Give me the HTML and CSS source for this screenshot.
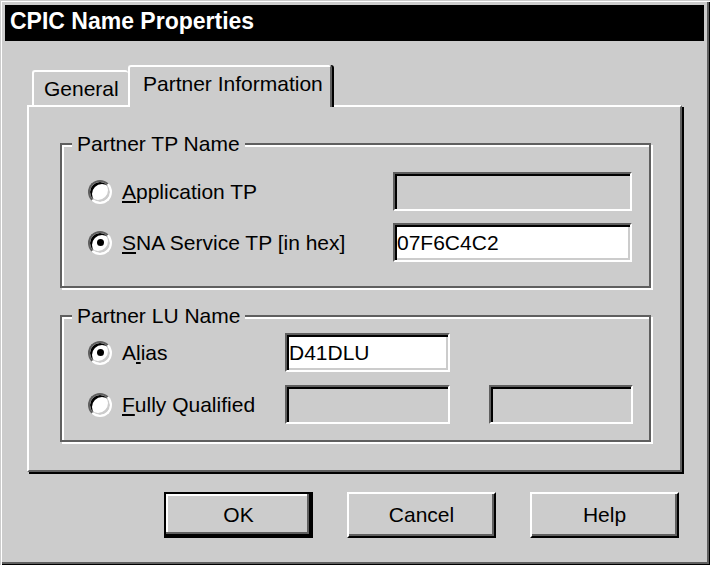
FILE: index.html
```html
<!DOCTYPE html>
<html lang="en">
<head>
    <meta charset="UTF-8">
    <title>CPIC Name Properties</title>
    <link rel="stylesheet" href="styles.css">
</head>
<body>

<div class="window">
    <div class="titlebar">CPIC Name Properties</div>

    <div class="tabs">
        <div class="tab">General</div>
        <div class="tab active">Partner Information</div>
    </div>

    <div class="panel">
        <fieldset class="group group-tp">
            <legend>Partner TP Name</legend>
            <div class="row">
                <label class="option"><span class="radio"></span><span><u>A</u>pplication TP</span></label>
                <div class="field disabled"></div>
            </div>
            <div class="row">
                <label class="option"><span class="radio checked"></span><span><u>S</u>NA Service TP [in hex]</span></label>
                <div class="field">07F6C4C2</div>
            </div>
        </fieldset>

        <fieldset class="group group-lu">
            <legend>Partner LU Name</legend>
            <div class="row">
                <label class="option"><span class="radio checked"></span><span>A<u>l</u>ias</span></label>
                <div class="field">D41DLU</div>
            </div>
            <div class="row">
                <label class="option"><span class="radio"></span><span><u>F</u>ully Qualified</span></label>
                <div class="field disabled"></div>
                <div class="field disabled small"></div>
            </div>
        </fieldset>
    </div>

    <div class="buttons">
        <button class="btn default">OK</button>
        <button class="btn">Cancel</button>
        <button class="btn">Help</button>
    </div>
</div>

</body>
</html>
```

FILE: styles.css
```css
body {
    margin: 0;
    background-color: #cccccc;
    font-family: 'Liberation Sans', Arial, sans-serif;
    font-size: 21px;
    color: #000;
}
.window {
    width: 710px;
    height: 565px;
    box-sizing: border-box;
    padding: 5px 6px 5px 5px;
    background-color: #cccccc;
    box-shadow: inset 1px 1px 0 #cccccc, inset 2px 2px 0 #fff, inset -1px -1px 0 #000, inset -3px -3px 0 #5f5f5f;
}
.titlebar {
    height: 36px;
    line-height: 33px;
    padding-left: 5px;
    background-color: #000;
    color: #fff;
    font-weight: bold;
    font-size: 23px;
}

/* вкладки */
.tabs {
    display: flex;
    align-items: flex-end;
    margin: 24px 0 -2px 27px;
    height: 42px;
}
.tab {
    box-sizing: border-box;
    line-height: 24px;
    border-top: 2px solid #fff;
    border-left: 2px solid #fff;
    border-radius: 3px 3px 0 0;
    background-color: #cccccc;
}
.tab:first-child {
    width: 96px;
    height: 35px;
    padding: 5px 0 0 10px;
    margin-bottom: 2px;
}
.tab.active {
    position: relative;
    z-index: 1;
    width: 204px;
    height: 42px;
    padding: 5px 0 0 13px;
    border-right: 2px solid #5f5f5f;
    box-shadow: 2px 0 0 #000;
}

.panel {
    width: 655px;
    height: 367px;
    box-sizing: border-box;
    margin-left: 22px;
    padding-top: 25px;
    border: 2px solid;
    border-color: #fff #5f5f5f #5f5f5f #fff;
    box-shadow: 2px 2px 0 #000;
}

/* рамки групп */
.group {
    width: 591px;
    box-sizing: border-box;
    min-width: 0;
    margin: 0 0 0 31px;
    padding: 0;
    border: 2px solid #5f5f5f;
    box-shadow: 2px 2px 0 #fff, inset 2px 2px 0 #fff;
}
.group legend {
    margin-left: 10px;
    padding: 0 5px;
    line-height: 24px;
    background-color: #cccccc;
}
.group-tp {
    padding: 16px 0 24px 0;
}
.group-lu {
    margin-top: 16px;
    padding: 5px 0 16px 0;
}
.row {
    display: flex;
    align-items: center;
    height: 39px;
    margin-left: 26px;
}
.group-tp .row + .row {
    margin-top: 12px;
}
.group-lu .row + .row {
    margin-top: 13px;
}
.option {
    display: flex;
    align-items: center;
    gap: 10px;
}
.group-tp .option {
    width: 305px;
}
.group-lu .option {
    width: 197px;
}
.radio {
    display: flex;
    align-items: center;
    justify-content: center;
    width: 24px;
    height: 24px;
    box-sizing: border-box;
    border: 2px solid;
    border-color: #5f5f5f #fff #fff #5f5f5f;
    border-radius: 50%;
    background-color: #fff;
    box-shadow: inset 2px 2px 0 #000, inset -2px -2px 0 #cccccc;
}
.radio.checked::after {
    content: "";
    width: 7px;
    height: 7px;
    border-radius: 50%;
    background-color: #000;
}

/* поля ввода */
.field {
    display: flex;
    align-items: center;
    width: 239px;
    height: 39px;
    box-sizing: border-box;
    padding-left: 2px;
    border: 2px solid;
    border-color: #5f5f5f #fff #fff #5f5f5f;
    box-shadow: inset 2px 2px 0 #000, inset -2px -2px 0 #cccccc;
    background-color: #fff;
}
.field.disabled {
    background-color: #cccccc;
}
.group-lu .field {
    width: 165px;
}
.group-lu .field.small {
    width: 144px;
    margin-left: 39px;
}

.buttons {
    display: flex;
    gap: 34px;
    margin: 20px 0 0 159px;
}
.btn {
    width: 149px;
    height: 46px;
    box-sizing: border-box;
    padding: 0;
    font-family: inherit;
    font-size: 21px;
    color: #000;
    background-color: #cccccc;
    border: 2px solid;
    border-color: #fff #000 #000 #fff;
    box-shadow: inset -2px -2px 0 #5f5f5f;
}
.btn.default {
    border-color: #000;
    box-shadow: inset -2px -2px 0 #000, inset -4px -4px 0 #5f5f5f, inset 2px 2px 0 #fff;
}
```
